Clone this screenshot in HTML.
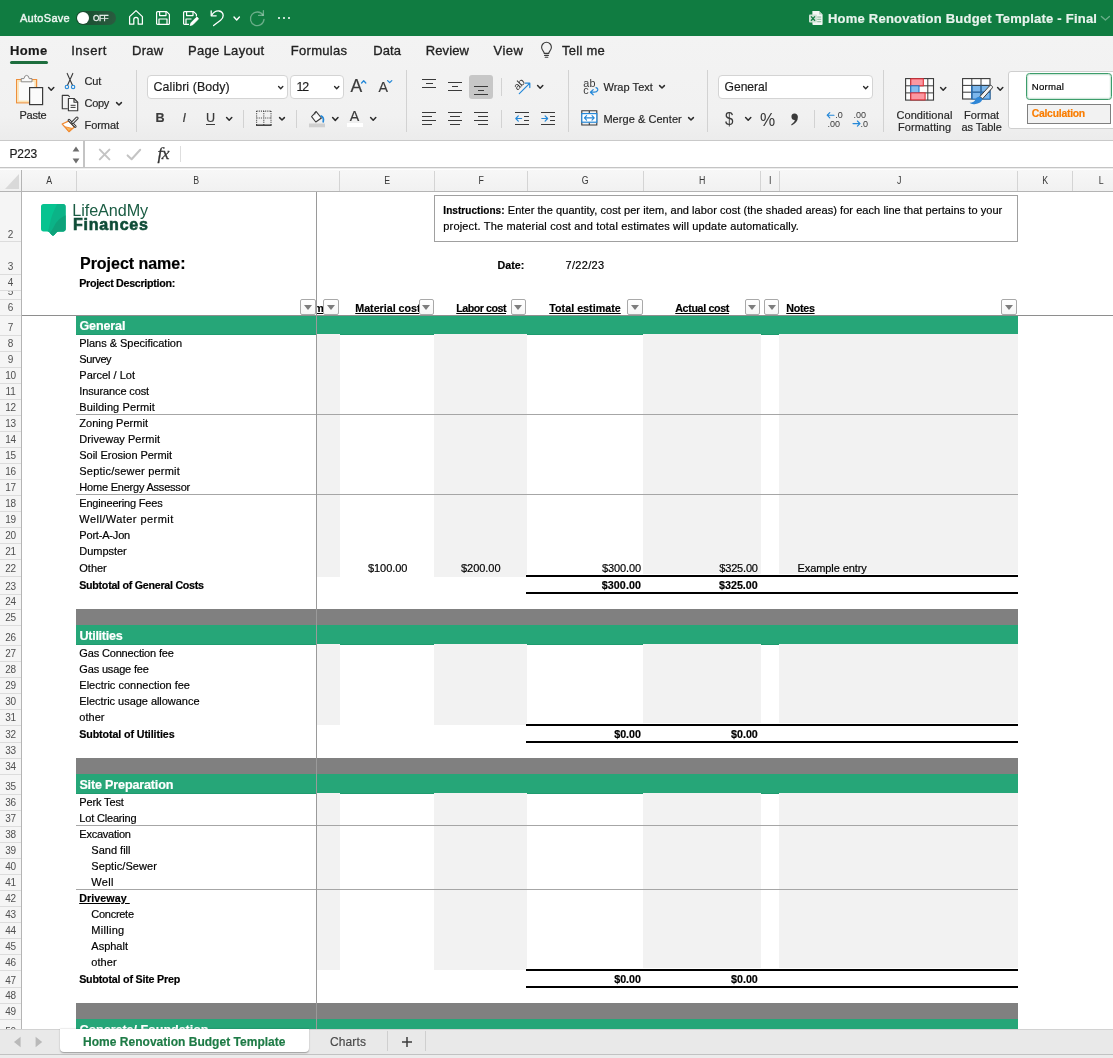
<!DOCTYPE html><html><head><meta charset="utf-8"><title>Home Renovation Budget Template - Final</title><style>
*{box-sizing:border-box;margin:0;padding:0}
html,body{width:1113px;height:1058px;overflow:hidden;background:#fff}
body{position:relative;font-family:"Liberation Sans",sans-serif;color:#000}
.a{position:absolute}
.t{position:absolute;white-space:pre;line-height:1;-webkit-text-stroke:.18px currentColor}
.k{color:#000}
.rh{left:0;width:21px;text-align:center}
.fb{position:absolute;width:15.5px;height:15.5px;top:299.2px;background:linear-gradient(#fff,#f6f6f6);border:1px solid #a9a9a9;border-radius:2px}
.fb:after{content:"";position:absolute;left:2.8px;top:4.7px;border-left:4.1px solid transparent;border-right:4.1px solid transparent;border-top:5.2px solid #7d7d7d}
svg{position:absolute;overflow:visible}
#root{position:absolute;left:0;top:0;width:1113px;height:1058px;overflow:hidden;will-change:transform}
.n{-webkit-text-stroke:0;letter-spacing:-.3px}
</style></head><body><div id="root">
<div class="a" style="left:0;top:170px;width:1113px;height:859px;overflow:hidden;background:#fff">
<div class="a" style="left:0;top:-170px;width:1113px;height:1058px">
<div class="a" style="left:76px;top:315px;width:942px;height:20px;background:#26a678;"></div>
<div class="a" style="left:76px;top:334px;width:942px;height:1px;background:#1f9b6f;"></div>
<div class="a" style="left:76px;top:625px;width:942px;height:20px;background:#26a678;"></div>
<div class="a" style="left:76px;top:644px;width:942px;height:1px;background:#1f9b6f;"></div>
<div class="a" style="left:76px;top:774px;width:942px;height:20px;background:#26a678;"></div>
<div class="a" style="left:76px;top:793px;width:942px;height:1px;background:#1f9b6f;"></div>
<div class="a" style="left:76px;top:1019px;width:942px;height:20px;background:#26a678;"></div>
<div class="a" style="left:76px;top:1038px;width:942px;height:1px;background:#1f9b6f;"></div>
<div class="a" style="left:76px;top:609px;width:942px;height:16px;background:#808080;"></div>
<div class="a" style="left:76px;top:758px;width:942px;height:16px;background:#808080;"></div>
<div class="a" style="left:76px;top:1003px;width:942px;height:16px;background:#808080;"></div>
<div class="a" style="left:317px;top:334px;width:22.600000000000023px;height:242.5px;background:#f2f2f2;"></div>
<div class="a" style="left:434px;top:334px;width:93px;height:242.5px;background:#f2f2f2;"></div>
<div class="a" style="left:643px;top:334px;width:118px;height:242.5px;background:#f2f2f2;"></div>
<div class="a" style="left:779px;top:334px;width:239px;height:242.5px;background:#f2f2f2;"></div>
<div class="a" style="left:317px;top:644px;width:22.600000000000023px;height:81px;background:#f2f2f2;"></div>
<div class="a" style="left:434px;top:644px;width:93px;height:81px;background:#f2f2f2;"></div>
<div class="a" style="left:643px;top:644px;width:118px;height:81px;background:#f2f2f2;"></div>
<div class="a" style="left:779px;top:644px;width:239px;height:81px;background:#f2f2f2;"></div>
<div class="a" style="left:317px;top:793px;width:22.600000000000023px;height:177px;background:#f2f2f2;"></div>
<div class="a" style="left:434px;top:793px;width:93px;height:177px;background:#f2f2f2;"></div>
<div class="a" style="left:643px;top:793px;width:118px;height:177px;background:#f2f2f2;"></div>
<div class="a" style="left:779px;top:793px;width:239px;height:177px;background:#f2f2f2;"></div>
<div class="a" style="left:526px;top:574px;width:492px;height:1px;background:#fff;"></div>
<div class="a" style="left:526px;top:723px;width:492px;height:1px;background:#fff;"></div>
<div class="a" style="left:526px;top:968px;width:492px;height:1px;background:#fff;"></div>
<div class="a" style="left:76px;top:414px;width:942px;height:1px;background:#a6a6a6;"></div>
<div class="a" style="left:76px;top:494px;width:942px;height:1px;background:#a6a6a6;"></div>
<div class="a" style="left:76px;top:825px;width:942px;height:1px;background:#a6a6a6;"></div>
<div class="a" style="left:76px;top:889px;width:942px;height:1px;background:#a6a6a6;"></div>
<div class="a" style="left:526px;top:575px;width:492px;height:2px;background:#000;"></div>
<div class="a" style="left:526px;top:592px;width:492px;height:2px;background:#000;"></div>
<div class="a" style="left:526px;top:724px;width:492px;height:2px;background:#000;"></div>
<div class="a" style="left:526px;top:741px;width:492px;height:2px;background:#000;"></div>
<div class="a" style="left:526px;top:969px;width:492px;height:2px;background:#000;"></div>
<div class="a" style="left:526px;top:986px;width:492px;height:2px;background:#000;"></div>
<div class="t" style="left:79.30px;top:337.85px;font-size:11px;color:#000;letter-spacing:-0.031px;">Plans &amp; Specification</div>
<div class="t" style="left:79.30px;top:353.85px;font-size:11px;color:#000;letter-spacing:-0.383px;">Survey</div>
<div class="t" style="left:79.30px;top:369.85px;font-size:11px;color:#000;">Parcel / Lot</div>
<div class="t" style="left:79.30px;top:385.85px;font-size:11px;color:#000;letter-spacing:-0.132px;">Insurance cost</div>
<div class="t" style="left:79.30px;top:401.85px;font-size:11px;color:#000;letter-spacing:0.114px;">Building Permit</div>
<div class="t" style="left:79.30px;top:417.85px;font-size:11px;color:#000;letter-spacing:0.017px;">Zoning Permit</div>
<div class="t" style="left:79.30px;top:433.85px;font-size:11px;color:#000;letter-spacing:0.041px;">Driveway Permit</div>
<div class="t" style="left:79.30px;top:449.85px;font-size:11px;color:#000;letter-spacing:-0.045px;">Soil Erosion Permit</div>
<div class="t" style="left:79.30px;top:465.85px;font-size:11px;color:#000;letter-spacing:0.216px;">Septic/sewer permit</div>
<div class="t" style="left:79.30px;top:481.85px;font-size:11px;color:#000;letter-spacing:-0.212px;">Home Energy Assessor</div>
<div class="t" style="left:79.30px;top:497.85px;font-size:11px;color:#000;letter-spacing:-0.190px;">Engineering Fees</div>
<div class="t" style="left:79.30px;top:513.85px;font-size:11px;color:#000;letter-spacing:0.450px;">Well/Water permit</div>
<div class="t" style="left:79.30px;top:529.85px;font-size:11px;color:#000;letter-spacing:-0.188px;">Port-A-Jon</div>
<div class="t" style="left:79.30px;top:545.85px;font-size:11px;color:#000;letter-spacing:-0.030px;">Dumpster</div>
<div class="t" style="left:79.30px;top:562.85px;font-size:11px;color:#000;letter-spacing:-0.013px;">Other</div>
<div class="t" style="left:79.30px;top:647.85px;font-size:11px;color:#000;letter-spacing:-0.155px;">Gas Connection fee</div>
<div class="t" style="left:79.30px;top:663.85px;font-size:11px;color:#000;letter-spacing:-0.162px;">Gas usage fee</div>
<div class="t" style="left:79.30px;top:679.85px;font-size:11px;color:#000;">Electric connection fee</div>
<div class="t" style="left:79.30px;top:695.85px;font-size:11px;color:#000;letter-spacing:-0.037px;">Electric usage allowance</div>
<div class="t" style="left:79.30px;top:711.85px;font-size:11px;color:#000;letter-spacing:0.024px;">other</div>
<div class="t" style="left:79.30px;top:796.85px;font-size:11px;color:#000;letter-spacing:-0.134px;">Perk Test</div>
<div class="t" style="left:79.30px;top:812.85px;font-size:11px;color:#000;letter-spacing:-0.177px;">Lot Clearing</div>
<div class="t" style="left:79.30px;top:828.85px;font-size:11px;color:#000;letter-spacing:-0.236px;">Excavation</div>
<div class="t" style="left:91.30px;top:844.85px;font-size:11px;color:#000;letter-spacing:0.007px;">Sand fill</div>
<div class="t" style="left:91.30px;top:860.85px;font-size:11px;color:#000;letter-spacing:0.074px;">Septic/Sewer</div>
<div class="t" style="left:91.30px;top:876.85px;font-size:11px;color:#000;letter-spacing:0.312px;">Well</div>
<div class="t" style="left:91.30px;top:908.85px;font-size:11px;color:#000;letter-spacing:-0.274px;">Concrete</div>
<div class="t" style="left:91.30px;top:924.85px;font-size:11px;color:#000;letter-spacing:0.288px;">Milling</div>
<div class="t" style="left:91.30px;top:940.85px;font-size:11px;color:#000;">Asphalt</div>
<div class="t" style="left:91.30px;top:956.85px;font-size:11px;color:#000;letter-spacing:0.074px;">other</div>
<div class="t" style="left:79.20px;top:580.00px;font-size:10.7px;font-weight:700;color:#000;letter-spacing:-0.266px;">Subtotal of General Costs</div>
<div class="t" style="left:79.20px;top:729.00px;font-size:10.7px;font-weight:700;color:#000;letter-spacing:-0.099px;">Subtotal of Utilities</div>
<div class="t" style="left:79.20px;top:974.00px;font-size:10.7px;font-weight:700;color:#000;letter-spacing:-0.205px;">Subtotal of Site Prep</div>
<div class="t" style="left:79.20px;top:893.00px;font-size:10.7px;font-weight:700;color:#000;letter-spacing:0.072px;text-decoration:underline;">Driveway </div>
<div class="t" style="left:79.40px;top:320.05px;font-size:12.6px;font-weight:700;color:#fff;letter-spacing:-0.144px;">General</div>
<div class="t" style="left:79.40px;top:630.05px;font-size:12.6px;font-weight:700;color:#fff;letter-spacing:-0.267px;">Utilities</div>
<div class="t" style="left:79.40px;top:779.05px;font-size:12.6px;font-weight:700;color:#fff;letter-spacing:-0.175px;">Site Preparation</div>
<div class="t" style="left:79.40px;top:1024.05px;font-size:12.6px;font-weight:700;color:#fff;letter-spacing:-0.052px;">Concrete/ Foundation</div>
<div class="t" style="left:368.00px;top:562.85px;font-size:11px;color:#000;letter-spacing:-0.074px;">$100.00</div>
<div class="t" style="left:461.00px;top:562.85px;font-size:11px;color:#000;letter-spacing:-0.038px;">$200.00</div>
<div class="t" style="left:602.00px;top:562.85px;font-size:11px;color:#000;letter-spacing:-0.109px;">$300.00</div>
<div class="t" style="left:719.30px;top:562.85px;font-size:11px;color:#000;letter-spacing:-0.181px;">$325.00</div>
<div class="t" style="left:797.50px;top:562.85px;font-size:11px;color:#000;letter-spacing:-0.086px;">Example entry</div>
<div class="t" style="left:601.80px;top:580.00px;font-size:10.7px;font-weight:700;color:#000;letter-spacing:0.080px;">$300.00</div>
<div class="t" style="left:719.00px;top:580.00px;font-size:10.7px;font-weight:700;color:#000;letter-spacing:0.023px;">$325.00</div>
<div class="t" style="left:614.20px;top:729.00px;font-size:10.7px;font-weight:700;color:#000;letter-spacing:0.010px;">$0.00</div>
<div class="t" style="left:731.00px;top:729.00px;font-size:10.7px;font-weight:700;color:#000;letter-spacing:0.010px;">$0.00</div>
<div class="t" style="left:614.20px;top:974.00px;font-size:10.7px;font-weight:700;color:#000;letter-spacing:0.010px;">$0.00</div>
<div class="t" style="left:731.00px;top:974.00px;font-size:10.7px;font-weight:700;color:#000;letter-spacing:0.010px;">$0.00</div>
<svg style="left:40px;top:203px" width="28" height="34" viewBox="0 0 28 34"><defs><clipPath id="lg"><path d="M3.6 1 H22.8 Q25.6 1 25.6 3.8 V25.8 Q25.6 28.4 23 28.4 H18.6 Q17.4 28.4 16.4 29.6 L14.2 32 Q13 33.2 11.8 32 L9.6 29.6 Q8.6 28.4 7.4 28.4 H3.6 Q1 28.4 1 25.8 V3.6 Q1 1 3.6 1Z"/></clipPath></defs><g clip-path="url(#lg)"><rect x="0" y="0" width="28" height="34" fill="#06c390"/><path d="M17.5 0 H28 V34 H5 C10 27 9.6 19 12.4 11.6 C13.8 7.6 16 4 17.5 0Z" fill="#0bb387"/><path d="M28 11.6 C20 14 16.6 18.6 14.4 22.8 C12.6 26.4 11 29 8.6 30.6 L12 34 H28Z" fill="#0ea27a"/></g></svg>
<div class="t" style="left:72.30px;top:202.25px;font-size:16.2px;color:#1a5c43;letter-spacing:-0.076px;-webkit-text-stroke:0;">LifeAndMy</div>
<div class="t" style="left:73.00px;top:216.85px;font-size:16px;font-weight:700;color:#0f4c37;letter-spacing:0.793px;-webkit-text-stroke:.6px #0f4c37;">Finances</div>
<div class="t" style="left:80.00px;top:255.85px;font-size:16px;font-weight:700;color:#000;letter-spacing:-0.024px;">Project name:</div>
<div class="t" style="left:79.20px;top:278.00px;font-size:10.7px;font-weight:700;color:#000;letter-spacing:-0.288px;">Project Description:</div>
<div class="a" style="left:434px;top:195px;width:584px;height:46.5px;border:1px solid #a0a0a0;background:#fff"></div>
<div class="t" style="left:443.30px;top:204.85px;font-size:11px;color:#000;letter-spacing:0.060px;"><b style="font-size:10px">Instructions:</b> Enter the quantity, cost per item, and labor cost (the shaded areas) for each line that pertains to your</div>
<div class="t" style="left:443.30px;top:220.85px;font-size:11px;color:#000;letter-spacing:0.171px;">project. The material cost and total estimates will update automatically.</div>
<div class="t" style="left:497.50px;top:260.00px;font-size:10.7px;font-weight:700;color:#000;">Date:</div>
<div class="t" style="left:565.50px;top:259.85px;font-size:11px;color:#000;letter-spacing:0.328px;">7/22/23</div>
<div class="a" style="left:317px;top:299px;width:23px;height:16px;overflow:hidden"><div class="t" style="left:-60.00px;top:4.00px;font-size:10.7px;font-weight:700;color:#000;text-decoration:underline;left:auto;right:16.3px;">Cost per item</div></div>
<div class="a" style="left:340px;top:299px;width:78.5px;height:16px;overflow:hidden"><div class="t" style="left:15.25px;top:4.00px;font-size:10.7px;font-weight:700;color:#000;text-decoration:underline;">Material cost</div></div>
<div class="t" style="left:456.25px;top:303.00px;font-size:10.7px;font-weight:700;color:#000;letter-spacing:-0.489px;text-decoration:underline;">Labor cost</div>
<div class="t" style="left:549.25px;top:303.00px;font-size:10.7px;font-weight:700;color:#000;letter-spacing:0.030px;text-decoration:underline;">Total estimate</div>
<div class="t" style="left:675.25px;top:303.00px;font-size:10.7px;font-weight:700;color:#000;letter-spacing:-0.351px;text-decoration:underline;">Actual cost</div>
<div class="t" style="left:786.25px;top:303.00px;font-size:10.7px;font-weight:700;color:#000;letter-spacing:-0.271px;text-decoration:underline;">Notes</div>
<div class="fb" style="left:300px"></div>
<div class="fb" style="left:323px"></div>
<div class="fb" style="left:418.5px"></div>
<div class="fb" style="left:510.5px"></div>
<div class="fb" style="left:627.2px"></div>
<div class="fb" style="left:744.5px"></div>
<div class="fb" style="left:763.8px"></div>
<div class="fb" style="left:1001.2px"></div>
<div class="a" style="left:22px;top:315px;width:1091px;height:1px;background:#8e8e8e;"></div>
<div class="a" style="left:316px;top:171px;width:1px;height:858px;background:#9a9a9a;"></div>
<div class="a" style="left:0px;top:170px;width:1113px;height:21px;background:linear-gradient(#f7f7f7,#f1f1f1);"></div>
<div class="a" style="left:0px;top:191px;width:1113px;height:1px;background:#b4b4b4;"></div>
<div class="a" style="left:0px;top:169px;width:1113px;height:1px;background:#bcbcbc;"></div>
<div class="a" style="left:29.0px;top:0;width:40px;text-align:center"><div class="t n" style="left:0.00px;top:175.85px;font-size:10px;color:#383838;left:0;width:40px;text-align:center;transform:scaleX(.88);">A</div></div>
<div class="a" style="left:176.0px;top:0;width:40px;text-align:center"><div class="t n" style="left:0.00px;top:175.85px;font-size:10px;color:#383838;left:0;width:40px;text-align:center;transform:scaleX(.88);">B</div></div>
<div class="a" style="left:366.8px;top:0;width:40px;text-align:center"><div class="t n" style="left:0.00px;top:175.85px;font-size:10px;color:#383838;left:0;width:40px;text-align:center;transform:scaleX(.88);">E</div></div>
<div class="a" style="left:460.5px;top:0;width:40px;text-align:center"><div class="t n" style="left:0.00px;top:175.85px;font-size:10px;color:#383838;left:0;width:40px;text-align:center;transform:scaleX(.88);">F</div></div>
<div class="a" style="left:565.0px;top:0;width:40px;text-align:center"><div class="t n" style="left:0.00px;top:175.85px;font-size:10px;color:#383838;left:0;width:40px;text-align:center;transform:scaleX(.88);">G</div></div>
<div class="a" style="left:682.0px;top:0;width:40px;text-align:center"><div class="t n" style="left:0.00px;top:175.85px;font-size:10px;color:#383838;left:0;width:40px;text-align:center;transform:scaleX(.88);">H</div></div>
<div class="a" style="left:750.0px;top:0;width:40px;text-align:center"><div class="t n" style="left:0.00px;top:175.85px;font-size:10px;color:#383838;left:0;width:40px;text-align:center;transform:scaleX(.88);">I</div></div>
<div class="a" style="left:878.5px;top:0;width:40px;text-align:center"><div class="t n" style="left:0.00px;top:175.85px;font-size:10px;color:#383838;left:0;width:40px;text-align:center;transform:scaleX(.88);">J</div></div>
<div class="a" style="left:1025.0px;top:0;width:40px;text-align:center"><div class="t n" style="left:0.00px;top:175.85px;font-size:10px;color:#383838;left:0;width:40px;text-align:center;transform:scaleX(.88);">K</div></div>
<div class="a" style="left:1080.5px;top:0;width:40px;text-align:center"><div class="t n" style="left:0.00px;top:175.85px;font-size:10px;color:#383838;left:0;width:40px;text-align:center;transform:scaleX(.88);">L</div></div>
<div class="a" style="left:75.5px;top:171px;width:1px;height:20px;background:#d4d4d4;"></div>
<div class="a" style="left:339.0px;top:171px;width:1px;height:20px;background:#d4d4d4;"></div>
<div class="a" style="left:434.0px;top:171px;width:1px;height:20px;background:#d4d4d4;"></div>
<div class="a" style="left:526.5px;top:171px;width:1px;height:20px;background:#d4d4d4;"></div>
<div class="a" style="left:643.0px;top:171px;width:1px;height:20px;background:#d4d4d4;"></div>
<div class="a" style="left:760.25px;top:171px;width:1px;height:20px;background:#d4d4d4;"></div>
<div class="a" style="left:779.0px;top:171px;width:1px;height:20px;background:#d4d4d4;"></div>
<div class="a" style="left:1017.25px;top:171px;width:1px;height:20px;background:#d4d4d4;"></div>
<div class="a" style="left:1072.0px;top:171px;width:1px;height:20px;background:#d4d4d4;"></div>
<div class="a" style="left:0px;top:192px;width:21px;height:840px;background:#f5f5f5;"></div>
<div class="a" style="left:21px;top:170px;width:1px;height:860px;background:#b4b4b4;"></div>
<div class="t n" style="left:0.00px;top:229.85px;font-size:10px;color:#505050;left:0;width:21px;text-align:center;">2</div>
<div class="a" style="left:0px;top:241.0px;width:21px;height:1px;background:#dcdcdc;"></div>
<div class="t n" style="left:0.00px;top:261.85px;font-size:10px;color:#505050;left:0;width:21px;text-align:center;">3</div>
<div class="a" style="left:0px;top:274.0px;width:21px;height:1px;background:#dcdcdc;"></div>
<div class="t n" style="left:0.00px;top:277.85px;font-size:10px;color:#505050;left:0;width:21px;text-align:center;">4</div>
<div class="a" style="left:0px;top:290.0px;width:21px;height:1px;background:#dcdcdc;"></div>
<div class="a" style="left:0;top:291.0px;width:21px;height:8.0px;overflow:hidden"><div class="t n" style="left:0.00px;top:-4.15px;font-size:10px;color:#505050;left:0;width:21px;text-align:center;">5</div></div>
<div class="a" style="left:0px;top:298.5px;width:21px;height:1px;background:#dcdcdc;"></div>
<div class="t n" style="left:0.00px;top:302.85px;font-size:10px;color:#505050;left:0;width:21px;text-align:center;">6</div>
<div class="a" style="left:0px;top:314.5px;width:21px;height:1px;background:#dcdcdc;"></div>
<div class="t n" style="left:0.00px;top:322.85px;font-size:10px;color:#505050;left:0;width:21px;text-align:center;">7</div>
<div class="a" style="left:0px;top:334.5px;width:21px;height:1px;background:#dcdcdc;"></div>
<div class="t n" style="left:0.00px;top:338.85px;font-size:10px;color:#505050;left:0;width:21px;text-align:center;">8</div>
<div class="a" style="left:0px;top:350.5px;width:21px;height:1px;background:#dcdcdc;"></div>
<div class="t n" style="left:0.00px;top:354.85px;font-size:10px;color:#505050;left:0;width:21px;text-align:center;">9</div>
<div class="a" style="left:0px;top:366.5px;width:21px;height:1px;background:#dcdcdc;"></div>
<div class="t n" style="left:0.00px;top:370.85px;font-size:10px;color:#505050;left:0;width:21px;text-align:center;">10</div>
<div class="a" style="left:0px;top:382.5px;width:21px;height:1px;background:#dcdcdc;"></div>
<div class="t n" style="left:0.00px;top:386.85px;font-size:10px;color:#505050;left:0;width:21px;text-align:center;">11</div>
<div class="a" style="left:0px;top:398.5px;width:21px;height:1px;background:#dcdcdc;"></div>
<div class="t n" style="left:0.00px;top:402.85px;font-size:10px;color:#505050;left:0;width:21px;text-align:center;">12</div>
<div class="a" style="left:0px;top:414.5px;width:21px;height:1px;background:#dcdcdc;"></div>
<div class="t n" style="left:0.00px;top:418.85px;font-size:10px;color:#505050;left:0;width:21px;text-align:center;">13</div>
<div class="a" style="left:0px;top:430.5px;width:21px;height:1px;background:#dcdcdc;"></div>
<div class="t n" style="left:0.00px;top:434.85px;font-size:10px;color:#505050;left:0;width:21px;text-align:center;">14</div>
<div class="a" style="left:0px;top:446.5px;width:21px;height:1px;background:#dcdcdc;"></div>
<div class="t n" style="left:0.00px;top:450.85px;font-size:10px;color:#505050;left:0;width:21px;text-align:center;">15</div>
<div class="a" style="left:0px;top:462.5px;width:21px;height:1px;background:#dcdcdc;"></div>
<div class="t n" style="left:0.00px;top:466.85px;font-size:10px;color:#505050;left:0;width:21px;text-align:center;">16</div>
<div class="a" style="left:0px;top:478.5px;width:21px;height:1px;background:#dcdcdc;"></div>
<div class="t n" style="left:0.00px;top:482.85px;font-size:10px;color:#505050;left:0;width:21px;text-align:center;">17</div>
<div class="a" style="left:0px;top:494.5px;width:21px;height:1px;background:#dcdcdc;"></div>
<div class="t n" style="left:0.00px;top:498.85px;font-size:10px;color:#505050;left:0;width:21px;text-align:center;">18</div>
<div class="a" style="left:0px;top:510.5px;width:21px;height:1px;background:#dcdcdc;"></div>
<div class="t n" style="left:0.00px;top:514.85px;font-size:10px;color:#505050;left:0;width:21px;text-align:center;">19</div>
<div class="a" style="left:0px;top:526.5px;width:21px;height:1px;background:#dcdcdc;"></div>
<div class="t n" style="left:0.00px;top:530.85px;font-size:10px;color:#505050;left:0;width:21px;text-align:center;">20</div>
<div class="a" style="left:0px;top:542.5px;width:21px;height:1px;background:#dcdcdc;"></div>
<div class="t n" style="left:0.00px;top:546.85px;font-size:10px;color:#505050;left:0;width:21px;text-align:center;">21</div>
<div class="a" style="left:0px;top:558.5px;width:21px;height:1px;background:#dcdcdc;"></div>
<div class="t n" style="left:0.00px;top:563.85px;font-size:10px;color:#505050;left:0;width:21px;text-align:center;">22</div>
<div class="a" style="left:0px;top:576.0px;width:21px;height:1px;background:#dcdcdc;"></div>
<div class="t n" style="left:0.00px;top:581.85px;font-size:10px;color:#505050;left:0;width:21px;text-align:center;">23</div>
<div class="a" style="left:0px;top:593.5px;width:21px;height:1px;background:#dcdcdc;"></div>
<div class="t n" style="left:0.00px;top:596.85px;font-size:10px;color:#505050;left:0;width:21px;text-align:center;">24</div>
<div class="a" style="left:0px;top:608.5px;width:21px;height:1px;background:#dcdcdc;"></div>
<div class="t n" style="left:0.00px;top:612.85px;font-size:10px;color:#505050;left:0;width:21px;text-align:center;">25</div>
<div class="a" style="left:0px;top:624.5px;width:21px;height:1px;background:#dcdcdc;"></div>
<div class="t n" style="left:0.00px;top:632.85px;font-size:10px;color:#505050;left:0;width:21px;text-align:center;">26</div>
<div class="a" style="left:0px;top:644.5px;width:21px;height:1px;background:#dcdcdc;"></div>
<div class="t n" style="left:0.00px;top:648.85px;font-size:10px;color:#505050;left:0;width:21px;text-align:center;">27</div>
<div class="a" style="left:0px;top:660.5px;width:21px;height:1px;background:#dcdcdc;"></div>
<div class="t n" style="left:0.00px;top:664.85px;font-size:10px;color:#505050;left:0;width:21px;text-align:center;">28</div>
<div class="a" style="left:0px;top:676.5px;width:21px;height:1px;background:#dcdcdc;"></div>
<div class="t n" style="left:0.00px;top:680.85px;font-size:10px;color:#505050;left:0;width:21px;text-align:center;">29</div>
<div class="a" style="left:0px;top:692.5px;width:21px;height:1px;background:#dcdcdc;"></div>
<div class="t n" style="left:0.00px;top:696.85px;font-size:10px;color:#505050;left:0;width:21px;text-align:center;">30</div>
<div class="a" style="left:0px;top:708.5px;width:21px;height:1px;background:#dcdcdc;"></div>
<div class="t n" style="left:0.00px;top:712.85px;font-size:10px;color:#505050;left:0;width:21px;text-align:center;">31</div>
<div class="a" style="left:0px;top:724.5px;width:21px;height:1px;background:#dcdcdc;"></div>
<div class="t n" style="left:0.00px;top:729.85px;font-size:10px;color:#505050;left:0;width:21px;text-align:center;">32</div>
<div class="a" style="left:0px;top:742.0px;width:21px;height:1px;background:#dcdcdc;"></div>
<div class="t n" style="left:0.00px;top:745.85px;font-size:10px;color:#505050;left:0;width:21px;text-align:center;">33</div>
<div class="a" style="left:0px;top:757.5px;width:21px;height:1px;background:#dcdcdc;"></div>
<div class="t n" style="left:0.00px;top:761.85px;font-size:10px;color:#505050;left:0;width:21px;text-align:center;">34</div>
<div class="a" style="left:0px;top:773.5px;width:21px;height:1px;background:#dcdcdc;"></div>
<div class="t n" style="left:0.00px;top:781.85px;font-size:10px;color:#505050;left:0;width:21px;text-align:center;">35</div>
<div class="a" style="left:0px;top:793.5px;width:21px;height:1px;background:#dcdcdc;"></div>
<div class="t n" style="left:0.00px;top:797.85px;font-size:10px;color:#505050;left:0;width:21px;text-align:center;">36</div>
<div class="a" style="left:0px;top:809.5px;width:21px;height:1px;background:#dcdcdc;"></div>
<div class="t n" style="left:0.00px;top:813.85px;font-size:10px;color:#505050;left:0;width:21px;text-align:center;">37</div>
<div class="a" style="left:0px;top:825.5px;width:21px;height:1px;background:#dcdcdc;"></div>
<div class="t n" style="left:0.00px;top:829.85px;font-size:10px;color:#505050;left:0;width:21px;text-align:center;">38</div>
<div class="a" style="left:0px;top:841.5px;width:21px;height:1px;background:#dcdcdc;"></div>
<div class="t n" style="left:0.00px;top:845.85px;font-size:10px;color:#505050;left:0;width:21px;text-align:center;">39</div>
<div class="a" style="left:0px;top:857.5px;width:21px;height:1px;background:#dcdcdc;"></div>
<div class="t n" style="left:0.00px;top:861.85px;font-size:10px;color:#505050;left:0;width:21px;text-align:center;">40</div>
<div class="a" style="left:0px;top:873.5px;width:21px;height:1px;background:#dcdcdc;"></div>
<div class="t n" style="left:0.00px;top:877.85px;font-size:10px;color:#505050;left:0;width:21px;text-align:center;">41</div>
<div class="a" style="left:0px;top:889.5px;width:21px;height:1px;background:#dcdcdc;"></div>
<div class="t n" style="left:0.00px;top:893.85px;font-size:10px;color:#505050;left:0;width:21px;text-align:center;">42</div>
<div class="a" style="left:0px;top:905.5px;width:21px;height:1px;background:#dcdcdc;"></div>
<div class="t n" style="left:0.00px;top:909.85px;font-size:10px;color:#505050;left:0;width:21px;text-align:center;">43</div>
<div class="a" style="left:0px;top:921.5px;width:21px;height:1px;background:#dcdcdc;"></div>
<div class="t n" style="left:0.00px;top:925.85px;font-size:10px;color:#505050;left:0;width:21px;text-align:center;">44</div>
<div class="a" style="left:0px;top:937.5px;width:21px;height:1px;background:#dcdcdc;"></div>
<div class="t n" style="left:0.00px;top:941.85px;font-size:10px;color:#505050;left:0;width:21px;text-align:center;">45</div>
<div class="a" style="left:0px;top:953.5px;width:21px;height:1px;background:#dcdcdc;"></div>
<div class="t n" style="left:0.00px;top:957.85px;font-size:10px;color:#505050;left:0;width:21px;text-align:center;">46</div>
<div class="a" style="left:0px;top:969.5px;width:21px;height:1px;background:#dcdcdc;"></div>
<div class="t n" style="left:0.00px;top:975.85px;font-size:10px;color:#505050;left:0;width:21px;text-align:center;">47</div>
<div class="a" style="left:0px;top:987.0px;width:21px;height:1px;background:#dcdcdc;"></div>
<div class="t n" style="left:0.00px;top:990.85px;font-size:10px;color:#505050;left:0;width:21px;text-align:center;">48</div>
<div class="a" style="left:0px;top:1002.5px;width:21px;height:1px;background:#dcdcdc;"></div>
<div class="t n" style="left:0.00px;top:1006.85px;font-size:10px;color:#505050;left:0;width:21px;text-align:center;">49</div>
<div class="a" style="left:0px;top:1018.5px;width:21px;height:1px;background:#dcdcdc;"></div>
<div class="t n" style="left:0.00px;top:1026.85px;font-size:10px;color:#505050;left:0;width:21px;text-align:center;">50</div>
<div class="a" style="left:0px;top:1038.5px;width:21px;height:1px;background:#dcdcdc;"></div>
<svg style="left:5px;top:174px" width="14" height="15"><path d="M14 0 V15 H0Z" fill="#d9d9d9"/></svg>
</div></div>
<div class="a" style="left:0;top:0;width:1113px;height:36px;background:#107c41"></div>
<div class="t" style="left:20.00px;top:12.85px;font-size:11px;color:rgba(255,255,255,.86);letter-spacing:0.287px;-webkit-text-stroke:.5px rgba(255,255,255,.8);">AutoSave</div>
<div class="a" style="left:76px;top:11px;width:40px;height:14px;border-radius:7px;background:linear-gradient(100deg,#154a2c,#2b5c40)"></div>
<div class="a" style="left:77px;top:12px;width:12px;height:12px;border-radius:6px;background:#fff"></div>
<div class="t" style="left:93.00px;top:14.75px;font-size:8.2px;color:rgba(255,255,255,.85);letter-spacing:-0.458px;-webkit-text-stroke:.35px rgba(255,255,255,.8);">OFF</div>
<svg style="left:128px;top:9px" width="16" height="17" viewBox="0 0 16 17" fill="none" stroke="#fff" stroke-width="1.25" stroke-linejoin="round" stroke-linecap="round"><path d="M1.6 7.6 L8 1.6 L14.4 7.6 V15.2 H10.2 V10.6 A2.2 2.2 0 0 0 5.8 10.6 V15.2 H1.6 Z"/></svg>
<svg style="left:155px;top:10px" width="16" height="16" viewBox="0 0 16 16" fill="none" stroke="#fff" stroke-width="1.2" stroke-linejoin="round"><path d="M2.6 1.6 H11.6 L14.4 4.4 V13.4 Q14.4 14.4 13.4 14.4 H2.6 Q1.6 14.4 1.6 13.4 V2.6 Q1.6 1.6 2.6 1.6Z"/><path d="M4.6 1.8 V5.6 H11 V1.8"/><path d="M4 14.2 V9 H12 V14.2"/></svg>
<svg style="left:182px;top:10px" width="18" height="17" viewBox="0 0 18 17" fill="none" stroke="#fff" stroke-width="1.2" stroke-linejoin="round"><path d="M7 14.4 H2.6 Q1.6 14.4 1.6 13.4 V2.6 Q1.6 1.6 2.6 1.6 H11.6 L14.4 4.4 V6.5"/><path d="M4.6 1.8 V5.6 H11 V1.8"/><path d="M4 14.2 V9 H9.5"/><path d="M8.2 15.6 L9 12.8 L14.2 7.6 Q15 6.9 15.9 7.8 Q16.7 8.7 16 9.4 L10.8 14.7 Z" fill="#fff" stroke-width=".8"/></svg>
<svg style="left:209px;top:9px" width="16" height="18" viewBox="0 0 16 18" fill="none" stroke="#fff" stroke-width="1.3" stroke-linecap="round" stroke-linejoin="round"><path d="M2.2 1.8 V6.8 H7.2"/><path d="M2.6 6.4 Q5.4 1.6 10 2 Q14 2.6 14.2 6.6 Q14.2 9.2 11.6 11.2 L4.6 16.6"/></svg>
<svg style="left:232.5px;top:15.5px" width="8" height="6" viewBox="0 0 8 6" fill="none" stroke="#fff" stroke-width="1.4" stroke-linecap="round" stroke-linejoin="round"><path d="M1 1 L3.7 4 L6.4 1"/></svg>
<svg style="left:248px;top:9px" width="18" height="18" viewBox="0 0 18 18" fill="none" stroke="rgba(255,255,255,.38)" stroke-width="1.3" stroke-linecap="round" stroke-linejoin="round"><path d="M15.4 1.6 V6.4 H10.6"/><path d="M15 6.2 A6.8 6.8 0 1 0 16 10.4"/></svg>
<div class="a" style="left:278px;top:17px;width:2.4px;height:2.4px;border-radius:2px;background:#fff"></div>
<div class="a" style="left:283px;top:17px;width:2.4px;height:2.4px;border-radius:2px;background:#fff"></div>
<div class="a" style="left:288px;top:17px;width:2.4px;height:2.4px;border-radius:2px;background:#fff"></div>
<svg style="left:808px;top:10px" width="16" height="16" viewBox="0 0 16 16"><path d="M4.4 1 H11 L14.6 4.6 V14 Q14.6 15 13.6 15 H5.4 Q4.4 15 4.4 14Z" fill="#f3f7f4"/><path d="M11 1 V4.6 H14.6Z" fill="#b9d3c3"/><rect x="9.2" y="6.4" width="4" height="1.3" fill="#9cc3ab"/><rect x="9.2" y="8.7" width="4" height="1.3" fill="#9cc3ab"/><rect x="9.2" y="11" width="4" height="1.3" fill="#9cc3ab"/><rect x="1" y="4.6" width="8" height="8" rx="1" fill="#cfe3d6"/><path d="M3 6.4 L7 10.8 M7 6.4 L3 10.8" stroke="#107c41" stroke-width="1.3"/></svg>
<div class="t" style="left:828.00px;top:12.35px;font-size:13px;font-weight:700;color:rgba(255,255,255,.9);letter-spacing:0.223px;">Home Renovation Budget Template - Final</div>
<svg style="left:1100px;top:15px" width="11" height="7" viewBox="0 0 11 7" fill="none" stroke="rgba(255,255,255,.38)" stroke-width="1.3" stroke-linecap="round" stroke-linejoin="round"><path d="M1.4 1.4 L5.4 5 L9.4 1.4"/></svg>
<div class="a" style="left:0;top:36px;width:1113px;height:105px;background:linear-gradient(#f3f3f3 0,#f1f1f1 80px,#ececec 104px)"></div>
<div class="a" style="left:0;top:140px;width:1113px;height:1px;background:#c9c9c9"></div>
<div class="t" style="left:10.00px;top:44.35px;font-size:13px;font-weight:700;color:#1a1a1a;letter-spacing:0.344px;">Home</div>
<div class="t" style="left:71.20px;top:44.35px;font-size:13px;color:#222;letter-spacing:0.547px;-webkit-text-stroke:.32px currentColor;">Insert</div>
<div class="t" style="left:132.00px;top:44.35px;font-size:13px;color:#222;letter-spacing:0.289px;-webkit-text-stroke:.32px currentColor;">Draw</div>
<div class="t" style="left:188.00px;top:44.35px;font-size:13px;color:#222;letter-spacing:0.317px;-webkit-text-stroke:.32px currentColor;">Page Layout</div>
<div class="t" style="left:290.80px;top:44.35px;font-size:13px;color:#222;letter-spacing:0.277px;-webkit-text-stroke:.32px currentColor;">Formulas</div>
<div class="t" style="left:373.30px;top:44.35px;font-size:13px;color:#222;letter-spacing:0.058px;-webkit-text-stroke:.32px currentColor;">Data</div>
<div class="t" style="left:425.70px;top:44.35px;font-size:13px;color:#222;letter-spacing:0.113px;-webkit-text-stroke:.32px currentColor;">Review</div>
<div class="t" style="left:493.60px;top:44.35px;font-size:13px;color:#222;letter-spacing:0.437px;-webkit-text-stroke:.32px currentColor;">View</div>
<div class="t" style="left:562.00px;top:44.35px;font-size:13px;color:#222;letter-spacing:0.259px;-webkit-text-stroke:.32px currentColor;">Tell me</div>
<div class="a" style="left:10px;top:61px;width:38px;height:3px;border-radius:1.5px;background:#1e6e3e"></div>
<svg style="left:540px;top:41px" width="13" height="18" viewBox="0 0 13 18" fill="none" stroke="#3a3a3a" stroke-width="1.1" stroke-linecap="round"><path d="M4.3 12.4 C4.3 10.4 1.6 9.4 1.6 6.2 A4.9 4.9 0 0 1 11.4 6.2 C11.4 9.4 8.7 10.4 8.7 12.4 Z"/><path d="M4.6 14.4 H8.4 M5.2 16.3 H7.8"/></svg>
<svg style="left:14px;top:72px" width="32" height="36" viewBox="0 0 32 36"><rect x="2.6" y="7.6" width="20" height="23.2" fill="#fbfbfb" stroke="#ee8f3b" stroke-width="1.2"/><rect x="4" y="9" width="17.2" height="20.4" fill="none" stroke="#fbe3b4" stroke-width="1.6"/><path d="M7.2 9.8 V6.6 H10 Q10.4 3.4 12.6 3.4 Q14.8 3.4 15.2 6.6 H18 V9.8 Z" fill="#f9f9f9" stroke="#8a8a8a" stroke-width="1"/><rect x="15.6" y="15.6" width="13" height="17" fill="#fbfbfb" stroke="#3a3a3a" stroke-width="1.2"/></svg>
<svg style="left:48px;top:87.32px" width="6.399999999999999" height="3.97" viewBox="0 0 6.399999999999999 3.97" fill="none" stroke="#2b2b2b" stroke-width="1.5" stroke-linecap="round" stroke-linejoin="round"><path d="M0.6 0.6 L3.20 3.27 L5.80 0.6"/></svg>
<div class="t" style="left:19.50px;top:109.85px;font-size:11px;color:#262626;letter-spacing:-0.268px;">Paste</div>
<svg style="left:64px;top:72px" width="12" height="18" viewBox="0 0 12 18" fill="none"><path d="M3.2 1.4 L8.6 13.4 M8.8 1.4 L3.4 13.4" stroke="#3a3a3a" stroke-width="1.1" stroke-linecap="round"/><circle cx="2.9" cy="15" r="1.7" stroke="#2488d8" stroke-width="1.1"/><circle cx="9.1" cy="15" r="1.7" stroke="#2488d8" stroke-width="1.1"/></svg>
<div class="t" style="left:84.50px;top:75.85px;font-size:11px;color:#262626;letter-spacing:-0.208px;">Cut</div>
<svg style="left:61px;top:94px" width="18" height="18" viewBox="0 0 18 18" fill="none" stroke="#3a3a3a" stroke-width="1.15" stroke-linejoin="round" stroke-linecap="round"><path d="M6.4 14.7 H1.3 V1.4 H7.2 L8.4 2.6" fill="none"/><path d="M7.4 4.5 H13 L16.7 8.2 V16.7 H7.4 Z" fill="#fbfbfb"/><path d="M13 4.6 V8.2 H16.6"/><path d="M10 11.3 H14.2 M10 13.4 H14.2" stroke-width="1"/></svg>
<div class="t" style="left:84.50px;top:97.85px;font-size:11px;color:#262626;letter-spacing:-0.297px;">Copy</div>
<svg style="left:116px;top:101.74px" width="6" height="3.72" viewBox="0 0 6 3.72" fill="none" stroke="#2b2b2b" stroke-width="1.5" stroke-linecap="round" stroke-linejoin="round"><path d="M0.6 0.6 L3.00 3.02 L5.40 0.6"/></svg>
<svg style="left:61px;top:116px" width="18" height="17" viewBox="0 0 18 17" fill="none" stroke-linejoin="round" stroke-linecap="round"><path d="M1.2 8 L8 4.9 L13.3 11 L8 15.7 Z" fill="#fff" stroke="#f0882e" stroke-width="1.2"/><path d="M4.6 10.9 L11.2 12.4 L8 15.2 Z" fill="#f9b659" stroke="#f0882e" stroke-width=".9"/><path d="M8 4.2 L14.2 10.4" stroke="#3a3a3a" stroke-width="2.8"/><path d="M8 4.2 L14.2 10.4" stroke="#f6f6f6" stroke-width=".9"/><path d="M11.8 6.4 L16 2.2" stroke="#3a3a3a" stroke-width="3.2"/><path d="M11.8 6.4 L16 2.2" stroke="#f6f6f6" stroke-width="1.2"/></svg>
<div class="t" style="left:84.50px;top:119.85px;font-size:11px;color:#262626;letter-spacing:-0.057px;">Format</div>
<div class="a" style="left:136.0px;top:70px;width:1px;height:62px;background:#d2d2d2"></div>
<div class="a" style="left:147px;top:75px;width:140.5px;height:23.5px;background:#fff;border:1px solid #d4d4d4;border-radius:4px"></div>
<div class="t" style="left:153.60px;top:81.15px;font-size:12.4px;color:#1c1c1c;letter-spacing:0.067px;">Calibri (Body)</div>
<svg style="left:277.8px;top:85.83px" width="5.399999999999977" height="3.35" viewBox="0 0 5.399999999999977 3.35" fill="none" stroke="#2b2b2b" stroke-width="1.4" stroke-linecap="round" stroke-linejoin="round"><path d="M0.6 0.6 L2.70 2.65 L4.80 0.6"/></svg>
<div class="a" style="left:290px;top:75px;width:53.8px;height:23.5px;background:#fff;border:1px solid #d4d4d4;border-radius:4px"></div>
<div class="t" style="left:296.40px;top:81.15px;font-size:12.4px;color:#1c1c1c;letter-spacing:-1.098px;">12</div>
<svg style="left:333.8px;top:85.83px" width="5.399999999999977" height="3.35" viewBox="0 0 5.399999999999977 3.35" fill="none" stroke="#2b2b2b" stroke-width="1.4" stroke-linecap="round" stroke-linejoin="round"><path d="M0.6 0.6 L2.70 2.65 L4.80 0.6"/></svg>
<div class="t" style="left:350.60px;top:77.60px;font-size:17.5px;color:#3a3a3a;letter-spacing:-0.088px;">A</div>
<svg style="left:361px;top:79.8px" width="5.4" height="3.6" viewBox="0 0 5.4 3.6" fill="none" stroke="#2488d8" stroke-width="1.3" stroke-linecap="round" stroke-linejoin="round"><path d="M0.6 3 L2.7 0.7 L4.8 3"/></svg>
<div class="t" style="left:378.40px;top:80.25px;font-size:14.2px;color:#3a3a3a;letter-spacing:0.131px;">A</div>
<svg style="left:387px;top:79.93px" width="5.399999999999977" height="3.35" viewBox="0 0 5.399999999999977 3.35" fill="none" stroke="#2488d8" stroke-width="1.3" stroke-linecap="round" stroke-linejoin="round"><path d="M0.6 0.6 L2.70 2.65 L4.80 0.6"/></svg>
<div class="t" style="left:155.40px;top:112.05px;font-size:12.6px;font-weight:700;color:#3c3c3c;letter-spacing:-1.309px;">B</div>
<div class="t" style="left:182.60px;top:112.05px;font-size:12.6px;color:#3c3c3c;letter-spacing:0.300px;font-style:italic;">I</div>
<div class="t" style="left:206.00px;top:112.05px;font-size:12.6px;color:#3c3c3c;letter-spacing:0.091px;">U</div>
<div class="a" style="left:206px;top:123.7px;width:9.2px;height:1.1px;background:#3c3c3c"></div>
<svg style="left:226px;top:117.22px" width="6.400000000000006" height="3.97" viewBox="0 0 6.400000000000006 3.97" fill="none" stroke="#2b2b2b" stroke-width="1.5" stroke-linecap="round" stroke-linejoin="round"><path d="M0.6 0.6 L3.20 3.27 L5.80 0.6"/></svg>
<div class="a" style="left:243.0px;top:110px;width:1px;height:17.599999999999994px;background:#d2d2d2"></div>
<svg style="left:256px;top:110px" width="16" height="17" viewBox="0 0 16 17" fill="none" stroke="#3a3a3a"><path d="M0.6 1.1 H15 M0.6 8 H15 M0.6 1.1 V15 M7.8 1.1 V15 M15 1.1 V15" stroke-width="1.1" stroke-dasharray="1 1.15"/><path d="M0 15.2 H15.6" stroke-width="1.5"/></svg>
<svg style="left:279px;top:117.34px" width="6" height="3.72" viewBox="0 0 6 3.72" fill="none" stroke="#2b2b2b" stroke-width="1.5" stroke-linecap="round" stroke-linejoin="round"><path d="M0.6 0.6 L3.00 3.02 L5.40 0.6"/></svg>
<div class="a" style="left:295.9px;top:110px;width:1px;height:17.599999999999994px;background:#d2d2d2"></div>
<svg style="left:309px;top:109.5px" width="17" height="18" viewBox="0 0 17 18" fill="none"><path d="M7.2 1.6 L12.4 8 L6.8 12 L2.6 6.6 Z" fill="#fafafa" stroke="#3a3a3a" stroke-width="1.1" stroke-linejoin="round"/><path d="M7.2 1.6 Q5.4 1.4 5.8 4.4" stroke="#3a3a3a" stroke-width="1"/><path d="M12.2 6 Q15.2 7.2 14.2 11.8" stroke="#2488d8" stroke-width="1.7" stroke-linecap="round"/><rect x="0" y="13.5" width="16" height="3.8" fill="#cfcfcf"/></svg>
<svg style="left:331.8px;top:117.15px" width="6.599999999999966" height="4.09" viewBox="0 0 6.599999999999966 4.09" fill="none" stroke="#2b2b2b" stroke-width="1.5" stroke-linecap="round" stroke-linejoin="round"><path d="M0.6 0.6 L3.30 3.39 L6.00 0.6"/></svg>
<div class="t" style="left:349.80px;top:109.25px;font-size:14.2px;color:#3a3a3a;letter-spacing:1.531px;">A</div>
<div class="a" style="left:347px;top:123px;width:16px;height:3.8px;background:#fff"></div>
<svg style="left:369.8px;top:117.22px" width="6.399999999999977" height="3.97" viewBox="0 0 6.399999999999977 3.97" fill="none" stroke="#2b2b2b" stroke-width="1.5" stroke-linecap="round" stroke-linejoin="round"><path d="M0.6 0.6 L3.20 3.27 L5.80 0.6"/></svg>
<div class="a" style="left:406.0px;top:70px;width:1px;height:61.5px;background:#d2d2d2"></div>
<div class="a" style="left:422px;top:78.80000000000001px;width:14.199999999999989px;height:1.2px;background:#3a3a3a"></div><div class="a" style="left:425.8px;top:82.9px;width:6.800000000000011px;height:1.2px;background:#3a3a3a"></div><div class="a" style="left:422px;top:87.0px;width:14.199999999999989px;height:1.2px;background:#3a3a3a"></div>
<div class="a" style="left:447.8px;top:81.9px;width:14.199999999999989px;height:1.2px;background:#3a3a3a"></div><div class="a" style="left:451.6px;top:86.0px;width:6.599999999999966px;height:1.2px;background:#3a3a3a"></div><div class="a" style="left:447.8px;top:90.10000000000001px;width:14.199999999999989px;height:1.2px;background:#3a3a3a"></div>
<div class="a" style="left:469px;top:75px;width:24px;height:23.8px;border-radius:3px;background:#c7c7c7"></div>
<div class="a" style="left:473.8px;top:86.0px;width:14.199999999999989px;height:1.2px;background:#3a3a3a"></div><div class="a" style="left:477.6px;top:90.10000000000001px;width:6.599999999999966px;height:1.2px;background:#3a3a3a"></div><div class="a" style="left:473.8px;top:94.10000000000001px;width:14.199999999999989px;height:1.2px;background:#3a3a3a"></div>
<div class="a" style="left:500.9px;top:78px;width:1px;height:18px;background:#d2d2d2"></div>
<svg style="left:512px;top:77px" width="20" height="18" viewBox="0 0 20 18" fill="none"><text x="0" y="0" text-anchor="middle" transform="translate(9.5 9.7) rotate(-45)" font-family="Liberation Sans, sans-serif" font-size="10.4" fill="#333">ab</text><path d="M7.3 16.7 L17.6 6.4 M13.4 6.2 H17.8 V10.6" stroke="#2488d8" stroke-width="1.2" stroke-linecap="round" stroke-linejoin="round"/></svg>
<svg style="left:536.8px;top:85.42px" width="6.400000000000091" height="3.97" viewBox="0 0 6.400000000000091 3.97" fill="none" stroke="#2b2b2b" stroke-width="1.5" stroke-linecap="round" stroke-linejoin="round"><path d="M0.6 0.6 L3.20 3.27 L5.80 0.6"/></svg>
<div class="a" style="left:422px;top:111.80000000000001px;width:14.199999999999989px;height:1.2px;background:#3a3a3a"></div><div class="a" style="left:422px;top:115.9px;width:10px;height:1.2px;background:#3a3a3a"></div><div class="a" style="left:422px;top:120.0px;width:14.199999999999989px;height:1.2px;background:#3a3a3a"></div><div class="a" style="left:422px;top:124.0px;width:10px;height:1.2px;background:#3a3a3a"></div>
<div class="a" style="left:447.8px;top:111.80000000000001px;width:14.199999999999989px;height:1.2px;background:#3a3a3a"></div><div class="a" style="left:450px;top:115.9px;width:9.800000000000011px;height:1.2px;background:#3a3a3a"></div><div class="a" style="left:447.8px;top:120.0px;width:14.199999999999989px;height:1.2px;background:#3a3a3a"></div><div class="a" style="left:450px;top:124.0px;width:9.800000000000011px;height:1.2px;background:#3a3a3a"></div>
<div class="a" style="left:473.8px;top:111.80000000000001px;width:14.199999999999989px;height:1.2px;background:#3a3a3a"></div><div class="a" style="left:478px;top:115.9px;width:10px;height:1.2px;background:#3a3a3a"></div><div class="a" style="left:473.8px;top:120.0px;width:14.199999999999989px;height:1.2px;background:#3a3a3a"></div><div class="a" style="left:478px;top:124.0px;width:10px;height:1.2px;background:#3a3a3a"></div>
<div class="a" style="left:500.9px;top:110px;width:1px;height:17.799999999999997px;background:#d2d2d2"></div>
<div class="a" style="left:515px;top:111.80000000000001px;width:14px;height:1.2px;background:#3a3a3a"></div><div class="a" style="left:523.6px;top:115.9px;width:5.399999999999977px;height:1.2px;background:#3a3a3a"></div><div class="a" style="left:523.6px;top:120.0px;width:5.399999999999977px;height:1.2px;background:#3a3a3a"></div><div class="a" style="left:515px;top:124.0px;width:14px;height:1.2px;background:#3a3a3a"></div>
<svg style="left:514.5px;top:115px" width="8" height="7" viewBox="0 0 8 7" fill="none" stroke="#2488d8" stroke-width="1.2" stroke-linecap="round" stroke-linejoin="round"><path d="M0.8 3.5 H6.6 M3.3 0.9 L0.8 3.5 L3.3 6.1"/></svg>
<div class="a" style="left:541px;top:111.80000000000001px;width:14.200000000000045px;height:1.2px;background:#3a3a3a"></div><div class="a" style="left:549.6px;top:115.9px;width:5.600000000000023px;height:1.2px;background:#3a3a3a"></div><div class="a" style="left:549.6px;top:120.0px;width:5.600000000000023px;height:1.2px;background:#3a3a3a"></div><div class="a" style="left:541px;top:124.0px;width:14.200000000000045px;height:1.2px;background:#3a3a3a"></div>
<svg style="left:540.5px;top:115px" width="8" height="7" viewBox="0 0 8 7" fill="none" stroke="#2488d8" stroke-width="1.2" stroke-linecap="round" stroke-linejoin="round"><path d="M0.8 3.5 H6.6 M4.1 0.9 L6.6 3.5 L4.1 6.1"/></svg>
<div class="a" style="left:567.9px;top:70px;width:1px;height:61.5px;background:#d2d2d2"></div>
<div class="t" style="left:583.20px;top:77.95px;font-size:10.8px;color:#3a3a3a;letter-spacing:0.192px;-webkit-text-stroke:0;">ab</div>
<div class="t" style="left:583.20px;top:84.95px;font-size:10.8px;color:#3a3a3a;letter-spacing:-0.006px;-webkit-text-stroke:0;">c</div>
<svg style="left:588.6px;top:86px" width="10" height="10" viewBox="0 0 10 10" fill="none" stroke="#2488d8" stroke-width="1.2" stroke-linecap="round" stroke-linejoin="round"><path d="M7 1.6 Q9.4 2.4 8.6 4.6 Q7.8 6.4 4.6 6.2 H1.6 M4.2 3.6 L1.4 6.2 L4.2 8.8"/></svg>
<div class="t" style="left:603.40px;top:81.85px;font-size:11px;color:#262626;letter-spacing:0.053px;">Wrap Text</div>
<svg style="left:659px;top:85.44px" width="6" height="3.72" viewBox="0 0 6 3.72" fill="none" stroke="#2b2b2b" stroke-width="1.5" stroke-linecap="round" stroke-linejoin="round"><path d="M0.6 0.6 L3.00 3.02 L5.40 0.6"/></svg>
<svg style="left:580.5px;top:110.4px" width="17" height="16" viewBox="0 0 17 16" fill="none"><path d="M0.8 0.8 H15.8 V15 H0.8 Z M8.3 0.8 V3.6 M8.3 12.2 V15" stroke="#3a3a3a" stroke-width="1.1"/><rect x="0.8" y="3.6" width="15" height="8.6" fill="#fff" stroke="#2488d8" stroke-width="1.2"/><path d="M3.4 7.9 H13.2 M5.6 5.7 L3.4 7.9 L5.6 10.1 M11 5.7 L13.2 7.9 L11 10.1" stroke="#2488d8" stroke-width="1.15" stroke-linecap="round" stroke-linejoin="round"/></svg>
<div class="t" style="left:603.40px;top:113.85px;font-size:11px;color:#262626;letter-spacing:0.053px;">Merge &amp; Center</div>
<svg style="left:688.2px;top:117.34px" width="6.0" height="3.72" viewBox="0 0 6.0 3.72" fill="none" stroke="#2b2b2b" stroke-width="1.5" stroke-linecap="round" stroke-linejoin="round"><path d="M0.6 0.6 L3.00 3.02 L5.40 0.6"/></svg>
<div class="a" style="left:707.1px;top:70px;width:1px;height:61.5px;background:#d2d2d2"></div>
<div class="a" style="left:718px;top:75px;width:154.8px;height:23.8px;background:#fff;border:1px solid #d4d4d4;border-radius:4px"></div>
<div class="t" style="left:724.60px;top:81.30px;font-size:12.1px;color:#1c1c1c;letter-spacing:-0.033px;">General</div>
<svg style="left:862.8px;top:85.73px" width="5.400000000000091" height="3.35" viewBox="0 0 5.400000000000091 3.35" fill="none" stroke="#2b2b2b" stroke-width="1.4" stroke-linecap="round" stroke-linejoin="round"><path d="M0.6 0.6 L2.70 2.65 L4.80 0.6"/></svg>
<div class="t" style="left:725.20px;top:109.35px;font-size:19px;color:#3a3a3a;-webkit-text-stroke:0;transform:scaleX(.8);transform-origin:0 0;">$</div>
<svg style="left:744.8px;top:117.22px" width="6.400000000000091" height="3.97" viewBox="0 0 6.400000000000091 3.97" fill="none" stroke="#2b2b2b" stroke-width="1.5" stroke-linecap="round" stroke-linejoin="round"><path d="M0.6 0.6 L3.20 3.27 L5.80 0.6"/></svg>
<div class="t" style="left:760.40px;top:110.55px;font-size:18.6px;color:#3a3a3a;-webkit-text-stroke:0;transform:scaleX(.92);transform-origin:0 0;">%</div>
<svg style="left:790px;top:112.6px" width="9" height="13" viewBox="0 0 9 13"><path d="M4.4 0.6 A3.2 3.2 0 0 1 7.9 4 Q7.9 9.4 1.6 12.4 L1.2 11.6 Q4.6 9.6 4.9 7 A3.2 3.2 0 0 1 4.4 0.6Z" fill="#3a3a3a"/></svg>
<div class="a" style="left:814.1px;top:110px;width:1px;height:17.599999999999994px;background:#d2d2d2"></div>
<svg style="left:826px;top:110.5px" width="18" height="17" viewBox="0 0 18 17" fill="none"><path d="M1.2 4.2 H8 M3.8 1.6 L1.2 4.2 L3.8 6.8" stroke="#2488d8" stroke-width="1.15" stroke-linecap="round" stroke-linejoin="round"/><text x="9.2" y="7.4" font-family="Liberation Sans, sans-serif" font-size="9" fill="#3a3a3a">.0</text><text x="1.6" y="15.6" font-family="Liberation Sans, sans-serif" font-size="9" fill="#3a3a3a">.00</text></svg>
<svg style="left:852px;top:110.5px" width="18" height="17" viewBox="0 0 18 17" fill="none"><text x="1.6" y="7.4" font-family="Liberation Sans, sans-serif" font-size="9" fill="#3a3a3a">.00</text><path d="M1 12.6 H8 M5.4 10 L8 12.6 L5.4 15.2" stroke="#2488d8" stroke-width="1.15" stroke-linecap="round" stroke-linejoin="round"/><text x="8.6" y="15.6" font-family="Liberation Sans, sans-serif" font-size="9" fill="#3a3a3a">.0</text></svg>
<div class="a" style="left:883.4px;top:70px;width:1px;height:61.5px;background:#d2d2d2"></div>
<svg style="left:904.5px;top:77.5px" width="29" height="23" viewBox="0 0 29 23"><rect x="0.6" y="0.6" width="27.9" height="21.5" fill="#fdfdfd" stroke="#3a3a3a" stroke-width="1.1"/><path d="M5.8 0.6 V22.1 M22.8 0.6 V22.1 M0.6 7.8 H28.5 M0.6 14.9 H28.5" stroke="#3a3a3a" stroke-width="1"/><rect x="5.8" y="0.8" width="12.5" height="7" fill="#fb98a2" stroke="#e0262f" stroke-width="1"/><rect x="5.8" y="7.8" width="8.2" height="7.1" fill="#86bdee" stroke="#1c72c4" stroke-width="1"/><rect x="5.8" y="14.9" width="14.3" height="7" fill="#fb98a2" stroke="#e0262f" stroke-width="1"/></svg>
<svg style="left:939.8px;top:87.22px" width="6.400000000000091" height="3.97" viewBox="0 0 6.400000000000091 3.97" fill="none" stroke="#2b2b2b" stroke-width="1.5" stroke-linecap="round" stroke-linejoin="round"><path d="M0.6 0.6 L3.20 3.27 L5.80 0.6"/></svg>
<div class="t" style="left:896.40px;top:109.85px;font-size:11px;color:#262626;letter-spacing:0.096px;">Conditional</div>
<div class="t" style="left:898.00px;top:121.85px;font-size:11px;color:#262626;letter-spacing:0.052px;">Formatting</div>
<svg style="left:961.5px;top:78px" width="32" height="28" viewBox="0 0 32 28"><rect x="0.6" y="0.6" width="27.4" height="20.4" fill="#fff" stroke="#3a3a3a" stroke-width="1.1"/><rect x="9.8" y="7.4" width="18.2" height="13.6" fill="#7cb7ec" stroke="#2478c8" stroke-width="1"/><path d="M9.8 0.6 V21 M19 0.6 V21 M0.6 7.4 H28 M0.6 14.2 H28" stroke="#3a3a3a" stroke-width="1"/><path d="M9.8 7.4 V21 M19 7.4 V21 M9.8 14.2 H28" stroke="#2478c8" stroke-width="1"/><path d="M29.4 7.6 Q31 8.4 30.4 9.8 L20.6 20.8 L17.8 18.6 L27.6 7.8 Q28.4 7 29.4 7.6Z" fill="#f4f4f4" stroke="#3a3a3a" stroke-width="1"/><path d="M17.6 18.8 L20.4 21 Q19.6 25.4 12.6 26.2 Q8.6 26.4 7.6 24.8 Q12.6 24 13.4 21.4 Q14.6 18.4 17.6 18.8Z" fill="#2e86d6"/></svg>
<svg style="left:996.8px;top:87.22px" width="6.400000000000091" height="3.97" viewBox="0 0 6.400000000000091 3.97" fill="none" stroke="#2b2b2b" stroke-width="1.5" stroke-linecap="round" stroke-linejoin="round"><path d="M0.6 0.6 L3.20 3.27 L5.80 0.6"/></svg>
<div class="t" style="left:964.00px;top:109.85px;font-size:11px;color:#262626;letter-spacing:0.059px;">Format</div>
<div class="t" style="left:961.50px;top:121.85px;font-size:11px;color:#262626;letter-spacing:-0.060px;">as Table</div>
<div class="a" style="left:1008.4px;top:71.2px;width:120px;height:57.6px;background:#fff;border:1px solid #cfcfcf;border-radius:3px"></div>
<div class="a" style="left:1026px;top:73px;width:86px;height:26.6px;background:#fff;border:1.6px solid #3c9d6b;border-radius:3.5px;box-shadow:inset 0 0 0 1.2px #cfe6d9"></div>
<div class="t" style="left:1031.70px;top:82.05px;font-size:9.6px;color:#000;letter-spacing:0.280px;">Normal</div>
<div class="a" style="left:1027px;top:104px;width:83.6px;height:19.6px;background:#f2f2f2;border:1px solid #7f7f7f"></div>
<div class="t" style="left:1031.70px;top:108.65px;font-size:10.4px;font-weight:700;color:#fa7d00;letter-spacing:-0.247px;">Calculation</div>
<div class="a" style="left:0;top:141px;width:1113px;height:26px;background:#fff"></div>
<div class="a" style="left:0;top:167px;width:1113px;height:1px;background:#c4c4c4"></div>
<div class="a" style="left:0;top:168px;width:1113px;height:1px;background:#ececec"></div>
<div class="a" style="left:82.6px;top:141px;width:2px;height:26px;background:#c4c4c4"></div>
<div class="t" style="left:9.50px;top:148.35px;font-size:12px;color:#1c1c1c;letter-spacing:-0.133px;">P223</div>
<svg style="left:71.5px;top:145.5px" width="8" height="18" viewBox="0 0 8 18"><path d="M4 0.6 L7.4 5.6 H0.6Z M4 17.4 L7.4 12.4 H0.6Z" fill="#6e6e6e"/></svg>
<svg style="left:98px;top:148px" width="14" height="13" viewBox="0 0 14 13" fill="none" stroke="#c4c4c4" stroke-width="2" stroke-linecap="round"><path d="M1.8 1.6 L11.4 11.4 M11.4 1.6 L1.8 11.4"/></svg>
<svg style="left:126px;top:148px" width="16" height="13" viewBox="0 0 16 13" fill="none" stroke="#c4c4c4" stroke-width="2" stroke-linecap="round" stroke-linejoin="round"><path d="M1.6 7.4 L5.6 11.2 L14.2 1.8"/></svg>
<div class="t" style="left:157.5px;top:144.5px;font-family:'Liberation Serif',serif;font-style:italic;font-size:17.5px;color:#333;letter-spacing:-.6px;-webkit-text-stroke:.3px #333">fx</div>
<div class="a" style="left:179.5px;top:146px;width:1px;height:16px;background:#dedede"></div>
<div class="a" style="left:0;top:1029px;width:1113px;height:29px;background:#e9e9e9"></div>
<div class="a" style="left:0;top:1029px;width:1113px;height:1px;background:#d2d2d2"></div>
<div class="a" style="left:0;top:1054px;width:1113px;height:1px;background:#c2c2c2"></div>
<div class="a" style="left:0;top:1055px;width:1113px;height:3px;background:#ececec"></div>
<svg style="left:13px;top:1036px" width="30" height="12" viewBox="0 0 30 12"><path d="M7.6 0.8 V11.2 L1 6Z M22.6 0.8 V11.2 L29.2 6Z" fill="#b9b9b9"/></svg>
<div class="a" style="left:60px;top:1029px;width:248.5px;height:22.5px;background:#fff;border-radius:0 0 4px 4px;box-shadow:0 .5px 1.5px rgba(0,0,0,.35)"></div>
<div class="t" style="left:83.00px;top:1036.35px;font-size:12px;font-weight:700;color:#1e7b46;letter-spacing:0.023px;">Home Renovation Budget Template</div>
<div class="t" style="left:330.00px;top:1036.35px;font-size:12px;color:#4a4a4a;letter-spacing:0.109px;">Charts</div>
<div class="a" style="left:387px;top:1031px;width:1px;height:20px;background:#cfcfcf"></div>
<div class="a" style="left:425px;top:1031px;width:1px;height:20px;background:#cfcfcf"></div>
<svg style="left:401px;top:1036px" width="12" height="12" viewBox="0 0 12 12" stroke="#3c3c3c" stroke-width="1.5" fill="none"><path d="M6 1 V11 M1 6 H11"/></svg>
</div></body></html>
